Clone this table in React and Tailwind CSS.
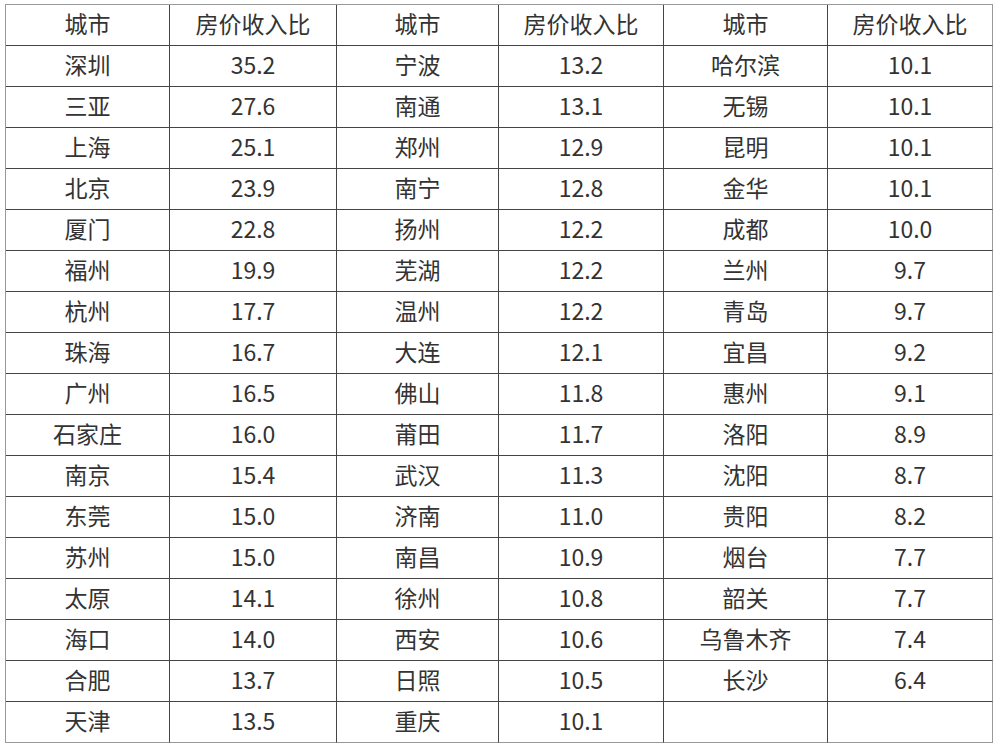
import React from "react";

const c1 = [["深圳","35.2"],["三亚","27.6"],["上海","25.1"],["北京","23.9"],["厦门","22.8"],["福州","19.9"],["杭州","17.7"],["珠海","16.7"],["广州","16.5"],["石家庄","16.0"],["南京","15.4"],["东莞","15.0"],["苏州","15.0"],["太原","14.1"],["海口","14.0"],["合肥","13.7"],["天津","13.5"]];
const c2 = [["宁波","13.2"],["南通","13.1"],["郑州","12.9"],["南宁","12.8"],["扬州","12.2"],["芜湖","12.2"],["温州","12.2"],["大连","12.1"],["佛山","11.8"],["莆田","11.7"],["武汉","11.3"],["济南","11.0"],["南昌","10.9"],["徐州","10.8"],["西安","10.6"],["日照","10.5"],["重庆","10.1"]];
const c3 = [["哈尔滨","10.1"],["无锡","10.1"],["昆明","10.1"],["金华","10.1"],["成都","10.0"],["兰州","9.7"],["青岛","9.7"],["宜昌","9.2"],["惠州","9.1"],["洛阳","8.9"],["沈阳","8.7"],["贵阳","8.2"],["烟台","7.7"],["韶关","7.7"],["乌鲁木齐","7.4"],["长沙","6.4"],["",""]];

const Cell = ({ children, last }) => (
  <div className={`h-[41px] flex items-center justify-center pb-[3px] border-b border-[#444] ${last ? "border-r-[#999]" : "border-r-[#444]"} border-r text-[23px] leading-none text-[#333]`}>
    {children}
  </div>
);

export default function App() {
  const rows = [["城市","房价收入比","城市","房价收入比","城市","房价收入比"]];
  for (let i = 0; i < 17; i++) {
    rows.push([c1[i][0], c1[i][1], c2[i][0], c2[i][1], c3[i][0], c3[i][1]]);
  }
  return (
    <div className="w-[1000px] h-[747px] bg-white pt-[4px] pl-[5px]" style={{ fontFamily: '"Noto Sans CJK SC", "Noto Sans", sans-serif' }}>
      <div className="grid grid-cols-[164px_167px_162px_165px_164px_165px] w-[988px] border-l border-t border-[#999] [&>div:nth-last-child(-n+6)]:border-b-[#999]">
        {rows.flatMap((r, ri) =>
          r.map((t, ci) => (
            <Cell key={ri + "-" + ci} last={ci === 5}>{t}</Cell>
          ))
        )}
      </div>
    </div>
  );
}
